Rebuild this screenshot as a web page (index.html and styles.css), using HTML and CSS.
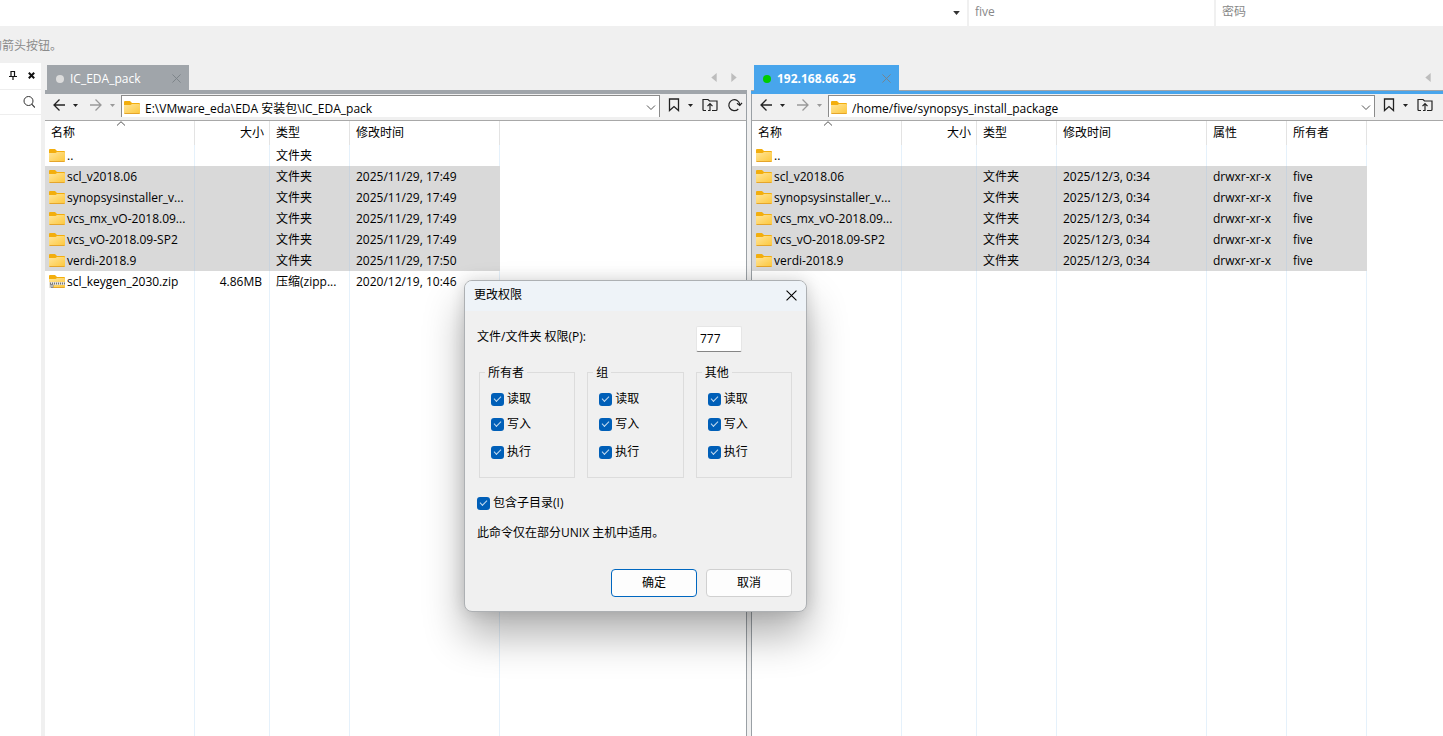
FILE: index.html
```html
<!DOCTYPE html>
<html lang="zh-CN">
<head>
<meta charset="utf-8">
<title>文件传输</title>
<link rel="stylesheet" href="styles.css">
</head>
<body>
<svg class="defs" aria-hidden="true">
  <defs>
    <linearGradient id="gold" x1="0" y1="0" x2="1" y2="1">
      <stop offset="0" stop-color="#ffe59a"/><stop offset="1" stop-color="#fdc73a"/>
    </linearGradient>
    <symbol id="folder" viewBox="0 0 16 14">
      <path d="M0 1Q0 0 1 0H6L8 2H15Q16 2 16 3V7H0Z" fill="#f3ae0d"/>
      <path d="M0 4H6.500L8 3H15Q16 3 16 4V12Q16 13 15 13H1Q0 13 0 12Z" fill="url(#gold)"/>
      <path d="M.5 12.500H15.500" stroke="#e5a52b"/>
    </symbol>
    <symbol id="zip" viewBox="0 0 16 14">
      <use href="#folder"/>
      <path d="M0 7H16V10H4V13H0Z" fill="#e6e3dc"/>
      <path d="M1 8.500H16" stroke="#777" stroke-width="2" stroke-dasharray="1 1"/>
      <path d="M1 9.500H4V12.500H2V9.500" stroke="#888" fill="none"/>
    </symbol>
    <symbol id="back" viewBox="0 0 12 12">
      <path d="M12 6H1M6.500.5L1 6L6.500 11.500" fill="none" stroke="currentColor" stroke-width="1.300"/>
    </symbol>
    <symbol id="forward" viewBox="0 0 12 12">
      <path d="M0 6H11M5.500.5L11 6L5.500 11.500" fill="none" stroke="currentColor" stroke-width="1.300"/>
    </symbol>
    <symbol id="down" viewBox="0 0 5 3"><path d="M0 0H5L2.500 3Z" fill="currentColor"/></symbol>
    <symbol id="chevron" viewBox="0 0 10 6"><path d="M1 .5L5 4.500L9 .5" fill="none" stroke="currentColor"/></symbol>
    <symbol id="mark" viewBox="0 0 12 14">
      <path d="M1.500 1H10.500V12.500L6 8.500L1.500 12.500Z" fill="none" stroke="currentColor" stroke-width="1.300"/>
    </symbol>
    <symbol id="upfolder" viewBox="0 0 16 14">
      <path d="M4 12.500H2Q1 12.500 1 11.500V1.500H6L7.500 3H15V11.500Q15 12.500 14 12.500H10M6 12.500H8V6M5.500 8.200L8 5.700L10.500 8.200" fill="none" stroke="currentColor" stroke-width="1.200"/>
    </symbol>
    <symbol id="reload" viewBox="0 0 16 14">
      <path d="M11.300 11A5.500 5.500 0 1 1 12.800 6.500M10 5.300L12.800 7.500L15 4.800" fill="none" stroke="currentColor" stroke-width="1.200"/>
    </symbol>
    <symbol id="cross" viewBox="0 0 10 10"><path d="M.5.5L9.500 9.500M9.500.5L.5 9.500" fill="none" stroke="currentColor"/></symbol>
    <symbol id="left" viewBox="0 0 6 10"><path d="M6 0V10L0 5Z" fill="currentColor"/></symbol>
    <symbol id="right" viewBox="0 0 6 10"><path d="M0 0V10L6 5Z" fill="currentColor"/></symbol>
  </defs>
</svg>

<header class="login">
  <div class="host"><button class="plain" aria-label="主机列表"><svg class="i-drop"><use href="#down"/></svg></button></div>
  <input class="user" aria-label="用户名" placeholder="five">
  <input class="pass" type="password" aria-label="密码" placeholder="密码">
</header>
<p class="hint"><span>的箭头按钮。</span></p>

<main class="work">
  <aside class="side">
    <div class="side-head">
      <button class="plain" aria-label="固定"><svg class="i-pin" viewBox="0 0 8 9"><path d="M2 0V5M2 .5H6M5.500 0V5M0 5.500H8M4 5V9" fill="none" stroke="#111" stroke-width="1.200"/></svg></button>
      <button class="plain" aria-label="关闭"><svg class="i-shut" viewBox="0 0 7 7"><path d="M.8.8L6.200 6.200M6.200.8L.8 6.200" stroke="#111" stroke-width="2"/></svg></button>
    </div>
    <div class="side-find">
      <button class="plain" aria-label="搜索"><svg class="i-find" viewBox="0 0 12 12"><circle cx="5.500" cy="5" r="4.500" fill="none" stroke="#333"/><path d="M8.700 8.200L12 11.500" stroke="#333" stroke-width="1.200"/></svg></button>
    </div>
  </aside>

  <section class="pane local">
    <div class="tabs">
      <div class="tab"><span class="dot"></span><span>IC_EDA_pack</span><button class="plain tab-x" aria-label="关闭标签"><svg class="i-x"><use href="#cross"/></svg></button></div>
      <div class="tab-nav"><button class="plain" aria-label="上一个"><svg class="i-tri"><use href="#left"/></svg></button><button class="plain" aria-label="下一个"><svg class="i-tri"><use href="#right"/></svg></button></div>
    </div>
    <div class="tools">
      <div class="nav">
        <button class="plain" aria-label="后退"><svg class="i-nav"><use href="#back"/></svg></button>
        <button class="plain" aria-label="后退历史"><svg class="i-down"><use href="#down"/></svg></button>
        <button class="plain off" aria-label="前进"><svg class="i-nav"><use href="#forward"/></svg></button>
        <button class="plain off" aria-label="前进历史"><svg class="i-down"><use href="#down"/></svg></button>
      </div>
      <div class="path"><svg class="i-file"><use href="#folder"/></svg><input aria-label="本地路径" value="E:\VMware_eda\EDA 安装包\IC_EDA_pack"><button class="plain" aria-label="展开"><svg class="i-chev"><use href="#chevron"/></svg></button></div>
      <div class="acts">
        <button class="plain" aria-label="书签"><svg class="i-mark"><use href="#mark"/></svg></button>
        <button class="plain" aria-label="书签列表"><svg class="i-down"><use href="#down"/></svg></button>
        <button class="plain" aria-label="上级目录"><svg class="i-act"><use href="#upfolder"/></svg></button>
        <button class="plain" aria-label="刷新"><svg class="i-act"><use href="#reload"/></svg></button>
      </div>
    </div>
    <div class="list">
      <table>
        <colgroup><col class="c-name"><col class="c-size"><col class="c-type"><col class="c-time"></colgroup>
        <thead><tr><th>名称<svg class="i-sort" viewBox="0 0 10 5"><path d="M1 4.500L5 .7L9 4.500" fill="none" stroke="#555"/></svg></th><th class="num">大小</th><th>类型</th><th>修改时间</th></tr></thead>
        <tbody>
          <tr><td><span class="file"><svg class="i-file"><use href="#folder"/></svg>..</span></td><td></td><td>文件夹</td><td></td></tr>
          <tr class="sel"><td><span class="file"><svg class="i-file"><use href="#folder"/></svg>scl_v2018.06</span></td><td></td><td>文件夹</td><td>2025/11/29, 17:49</td></tr>
          <tr class="sel"><td><span class="file"><svg class="i-file"><use href="#folder"/></svg>synopsysinstaller_v...</span></td><td></td><td>文件夹</td><td>2025/11/29, 17:49</td></tr>
          <tr class="sel"><td><span class="file"><svg class="i-file"><use href="#folder"/></svg>vcs_mx_vO-2018.09...</span></td><td></td><td>文件夹</td><td>2025/11/29, 17:49</td></tr>
          <tr class="sel"><td><span class="file"><svg class="i-file"><use href="#folder"/></svg>vcs_vO-2018.09-SP2</span></td><td></td><td>文件夹</td><td>2025/11/29, 17:49</td></tr>
          <tr class="sel"><td><span class="file"><svg class="i-file"><use href="#folder"/></svg>verdi-2018.9</span></td><td></td><td>文件夹</td><td>2025/11/29, 17:50</td></tr>
          <tr><td><span class="file"><svg class="i-file"><use href="#zip"/></svg>scl_keygen_2030.zip</span></td><td class="num">4.86MB</td><td>压缩(zipp...</td><td>2020/12/19, 10:46</td></tr>
          <tr class="rest"><td></td><td></td><td></td><td></td></tr>
        </tbody>
      </table>
    </div>
  </section>

  <section class="pane remote">
    <div class="tabs">
      <div class="tab"><span class="dot"></span><span>192.168.66.25</span><button class="plain tab-x" aria-label="关闭标签"><svg class="i-x"><use href="#cross"/></svg></button></div>
      <div class="tab-nav"><button class="plain" aria-label="上一个"><svg class="i-tri"><use href="#left"/></svg></button><button class="plain" aria-label="下一个"><svg class="i-tri"><use href="#right"/></svg></button></div>
    </div>
    <div class="tools">
      <div class="nav">
        <button class="plain" aria-label="后退"><svg class="i-nav"><use href="#back"/></svg></button>
        <button class="plain" aria-label="后退历史"><svg class="i-down"><use href="#down"/></svg></button>
        <button class="plain off" aria-label="前进"><svg class="i-nav"><use href="#forward"/></svg></button>
        <button class="plain off" aria-label="前进历史"><svg class="i-down"><use href="#down"/></svg></button>
      </div>
      <div class="path"><svg class="i-file"><use href="#folder"/></svg><input aria-label="远程路径" value="/home/five/synopsys_install_package"><button class="plain" aria-label="展开"><svg class="i-chev"><use href="#chevron"/></svg></button></div>
      <div class="acts">
        <button class="plain" aria-label="书签"><svg class="i-mark"><use href="#mark"/></svg></button>
        <button class="plain" aria-label="书签列表"><svg class="i-down"><use href="#down"/></svg></button>
        <button class="plain" aria-label="上级目录"><svg class="i-act"><use href="#upfolder"/></svg></button>
        <button class="plain" aria-label="刷新"><svg class="i-act"><use href="#reload"/></svg></button>
      </div>
    </div>
    <div class="list">
      <table>
        <colgroup><col class="c-name"><col class="c-size"><col class="c-type"><col class="c-time"><col class="c-type"><col class="c-type"></colgroup>
        <thead><tr><th>名称<svg class="i-sort" viewBox="0 0 10 5"><path d="M1 4.500L5 .7L9 4.500" fill="none" stroke="#555"/></svg></th><th class="num">大小</th><th>类型</th><th>修改时间</th><th>属性</th><th>所有者</th></tr></thead>
        <tbody>
          <tr><td><span class="file"><svg class="i-file"><use href="#folder"/></svg>..</span></td><td></td><td></td><td></td><td></td><td></td></tr>
          <tr class="sel"><td><span class="file"><svg class="i-file"><use href="#folder"/></svg>scl_v2018.06</span></td><td></td><td>文件夹</td><td>2025/12/3, 0:34</td><td>drwxr-xr-x</td><td>five</td></tr>
          <tr class="sel"><td><span class="file"><svg class="i-file"><use href="#folder"/></svg>synopsysinstaller_v...</span></td><td></td><td>文件夹</td><td>2025/12/3, 0:34</td><td>drwxr-xr-x</td><td>five</td></tr>
          <tr class="sel"><td><span class="file"><svg class="i-file"><use href="#folder"/></svg>vcs_mx_vO-2018.09...</span></td><td></td><td>文件夹</td><td>2025/12/3, 0:34</td><td>drwxr-xr-x</td><td>five</td></tr>
          <tr class="sel"><td><span class="file"><svg class="i-file"><use href="#folder"/></svg>vcs_vO-2018.09-SP2</span></td><td></td><td>文件夹</td><td>2025/12/3, 0:34</td><td>drwxr-xr-x</td><td>five</td></tr>
          <tr class="sel"><td><span class="file"><svg class="i-file"><use href="#folder"/></svg>verdi-2018.9</span></td><td></td><td>文件夹</td><td>2025/12/3, 0:34</td><td>drwxr-xr-x</td><td>five</td></tr>
          <tr class="rest"><td></td><td></td><td></td><td></td><td></td><td></td></tr>
        </tbody>
      </table>
    </div>
  </section>
</main>

<form class="dialog" role="dialog" aria-labelledby="dlg-title">
  <div class="dlg-head"><h1 id="dlg-title">更改权限</h1><button type="button" class="plain" aria-label="关闭"><svg class="i-close"><use href="#cross"/></svg></button></div>
  <div class="dlg-body">
    <div class="mode"><label for="mode">文件/文件夹 权限(P):</label><input id="mode" value="777"></div>
    <div class="groups">
      <fieldset><legend>所有者</legend>
        <label><input type="checkbox" checked>读取</label><label><input type="checkbox" checked>写入</label><label><input type="checkbox" checked>执行</label>
      </fieldset>
      <fieldset><legend>组</legend>
        <label><input type="checkbox" checked>读取</label><label><input type="checkbox" checked>写入</label><label><input type="checkbox" checked>执行</label>
      </fieldset>
      <fieldset><legend>其他</legend>
        <label><input type="checkbox" checked>读取</label><label><input type="checkbox" checked>写入</label><label><input type="checkbox" checked>执行</label>
      </fieldset>
    </div>
    <label class="deep"><input type="checkbox" checked>包含子目录(I)</label>
    <p class="note">此命令仅在部分UNIX 主机中适用。</p>
    <div class="dlg-acts"><button type="button" class="btn main">确定</button><button type="button" class="btn">取消</button></div>
  </div>
</form>
</body>
</html>
```
FILE: styles.css
```css
* { box-sizing: border-box; }
body {
  margin: 0;
  height: 100vh;
  display: flex;
  flex-direction: column;
  overflow: hidden;
  background: #f0f0f0;
  color: #000;
  font: 12px/16px "Open Sans", "Noto Sans CJK SC", sans-serif;
}
input, button { font: inherit; color: inherit; }
svg { display: block; flex: none; }
.defs { position: absolute; width: 0; height: 0; }
.plain { display: flex; padding: 0; border: 0; background: none; }

/* login bar */
.login {
  flex: none;
  height: 26px;
  display: grid;
  grid-template-columns: 967px 245px 1fr;
  gap: 2px;
}
.host { display: flex; justify-content: flex-end; align-items: center; padding-right: 7px; background: #fff; }
.login input { min-width: 0; border: 0; padding: 0 6px 2px; background: #fff; }
.login input::placeholder { color: #888; }
.i-drop { width: 7px; height: 4px; color: #333; }
.hint { flex: none; height: 37px; margin: 0; padding-top: 12px; color: #8c8c8c; }
.hint span { margin-left: -10px; }

/* work area */
.work { flex: 1; min-height: 0; display: flex; gap: 4px; }
.side { flex: none; width: 41px; background: #fff; }
.side-head { height: 27px; display: flex; align-items: center; justify-content: flex-end; gap: 11px; padding: 0 6px 2px; border-bottom: 1px solid #eee; }
.side-find { height: 25px; display: flex; align-items: center; justify-content: flex-end; padding-right: 6px; border-bottom: 1px solid #eee; }
.i-pin { width: 8px; height: 9px; }
.i-shut { width: 7px; height: 7px; }
.i-find { width: 12px; height: 12px; }

.pane { display: flex; flex-direction: column; min-width: 0; padding-top: 2px; }
.local { flex: 702 1 0; --accent: #a0a5aa; --dot: #dcdcdc; }
.remote { flex: 710 1 0; margin-right: -18px; --accent: #48a5ec; --dot: #0c0; }
.tabs { flex: none; height: 29px; display: flex; align-items: flex-start; justify-content: space-between; padding-left: 2px; border-bottom: 3px solid var(--accent); box-shadow: inset 0 -1px #a0a5aa; }
.remote .tabs { padding-left: 3px; }
.tab { height: 26px; min-width: 142px; display: flex; align-items: center; gap: 6px; padding: 1px 8px 0 9px; background: var(--accent); color: #fff; }
.remote .tab { min-width: 145px; font-weight: 700; }
.dot { width: 8px; height: 8px; border-radius: 50%; background: var(--dot); }
.tab-x { margin-left: auto; color: #7b8187; }
.i-x { width: 9px; height: 9px; }
.tab-nav { display: flex; gap: 14px; padding: 8px 10px 0 0; color: #bdbdbd; }
.i-tri { width: 6px; height: 9px; }

.tools { flex: none; height: 27px; display: flex; padding-top: 1px; border-bottom: 1px solid #a8a8a8; }
.local .tools, .local .list { border-right: 1px solid #9aa0a5; }
.remote .tools, .remote .list { border-left: 1px solid #9aa0a5; }
.nav { width: 76px; display: flex; align-items: center; padding: 0 0 5px 8px; color: #222; }
.nav .plain:nth-child(2) { margin: 0 12px 0 8px; }
.nav .plain:nth-child(4) { margin-left: 8px; }
.off { color: #999; }
.i-nav { width: 12px; height: 12px; }
.i-down { width: 5px; height: 3px; }
.path { flex: 1; min-width: 0; height: 22px; display: flex; align-items: center; gap: 5px; padding: 2px 3px 0 2px; border: 1px solid #8b8b8b; border-bottom: 0; background: #fff; }
.path input { flex: 1; min-width: 0; padding: 2px 0 0; border: 0; background: none; outline: 0; }
.i-chev { width: 10px; height: 6px; color: #555; }
.acts { width: 86px; display: flex; align-items: center; padding: 0 2px 5px 8px; color: #222; }
.acts .plain:nth-child(2) { margin: 0 9px 0 8px; }
.acts .plain:nth-child(4) { margin-left: 9px; }
.i-mark { width: 12px; height: 14px; }
.i-act { width: 16px; height: 14px; }

.list { flex: 1; min-height: 0; background: #fff; }
table { height: 100%; table-layout: fixed; width: 0; border-collapse: separate; border-spacing: 0; }
.c-name, .c-time { width: 150px; }
.c-size { width: 75px; }
.c-type { width: 80px; }
th, td { height: 21px; padding: 0 0 0 6px; border-right: 1px solid #e5f1fb; text-align: left; font-weight: 400; line-height: 20px; white-space: nowrap; overflow: hidden; }
th { position: relative; height: 24px; border-color: #e3e3e3; }
th.num { padding-right: 5px; text-align: right; }
td.num { padding-right: 7px; text-align: right; }
td:first-child { padding-left: 4px; }
.sel td { background: #d9d9d9; border-color: #c9d3dd; }
.sel td:last-child { border-color: #d9d9d9; }
.rest td { height: auto; }
.file { display: flex; align-items: center; gap: 2px; }
.i-file { width: 16px; height: 14px; }
.i-sort { position: absolute; left: 71px; top: 0; width: 10px; height: 5px; }

/* permissions dialog */
.dialog {
  position: absolute;
  left: 464px;
  top: 280px;
  width: 343px;
  border: 1px solid #adb0b3;
  border-radius: 8px;
  background: #f0f0f0;
  box-shadow: 0 24px 40px rgba(0, 0, 0, .3), 0 0 16px rgba(0, 0, 0, .14);
  overflow: hidden;
}
.dlg-head { height: 30px; display: flex; align-items: center; justify-content: space-between; padding: 0 9px 2px; background: #eef3f8; }
.dlg-head h1 { margin: 0; font: inherit; }
.i-close { width: 11px; height: 11px; }
.dlg-body { padding: 15px 14px 14px 12px; }
.mode { display: flex; justify-content: space-between; padding-right: 50px; }
.mode label { padding-top: 3px; }
.mode input { width: 46px; height: 26px; padding: 0 3px 2px; border: 1px solid #e6e6e6; border-bottom-color: #868686; border-radius: 2px; background: #fff; }
.groups { display: grid; grid-template-columns: repeat(3, 1fr); gap: 12px; padding: 11px 0 0 2px; }
fieldset { min-width: 0; height: 115px; margin: 0; padding: 10px 0 0 11px; border: 1px solid #dcdcdc; }
legend { margin-left: -6px; padding: 2px 3px 0; }
fieldset label, .deep { display: flex; align-items: center; gap: 3px; }
fieldset label:nth-of-type(2) { margin: 9px 0 12px; }
input[type="checkbox"] { appearance: none; flex: none; display: grid; place-items: center; width: 13px; height: 13px; margin: 0; border-radius: 3px; background: #005fb8; }
input[type="checkbox"]:checked::after { content: ""; width: 6px; height: 3px; border: solid #c4dcf0; border-width: 0 0 1px 1px; transform: translateY(-1px) rotate(-45deg); }
.deep { margin-top: 17px; }
.note { margin: 14px 0 0; }
.dlg-acts { display: flex; justify-content: flex-end; gap: 9px; margin-top: 28px; }
.btn { width: 86px; height: 28px; padding: 0; border: 1px solid #d0d0d0; border-radius: 4px; background: #fdfdfd; }
.btn.main { border-color: #0067c0; }
```
